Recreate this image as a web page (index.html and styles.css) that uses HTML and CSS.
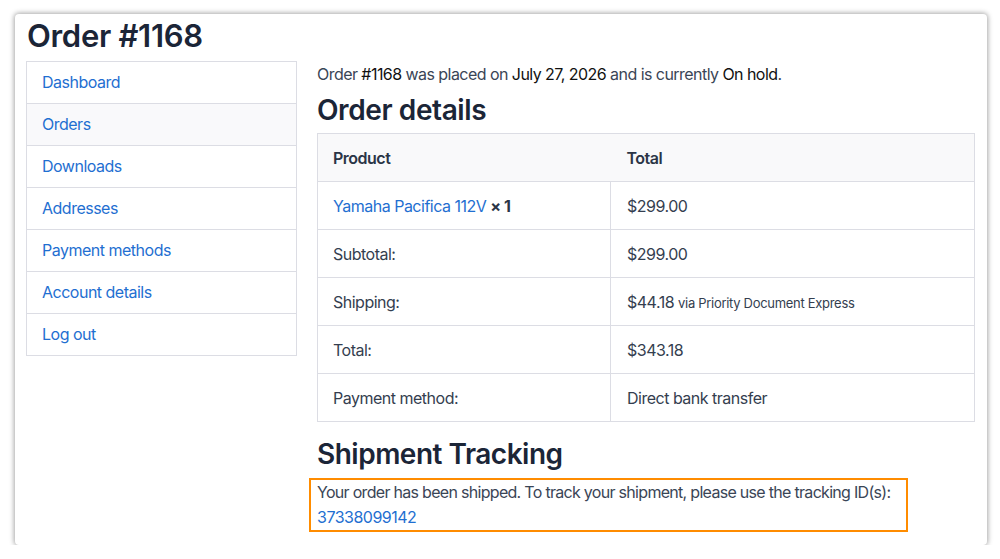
FILE: index.html
```html
<!DOCTYPE html>
<html>
<head>
<meta charset="utf-8">
<link rel="stylesheet" href="styles.css">
</head>
<body>
<div class="card">
  <h1 class="title">Order #1168</h1>
  <div class="layout">
    <nav class="nav">
      <a class="nav-item" href="#">Dashboard</a>
      <a class="nav-item active" href="#">Orders</a>
      <a class="nav-item" href="#">Downloads</a>
      <a class="nav-item" href="#">Addresses</a>
      <a class="nav-item" href="#">Payment methods</a>
      <a class="nav-item" href="#">Account details</a>
      <a class="nav-item" href="#">Log out</a>
    </nav>
    <main class="main">
      <p class="intro">Order <mark>#1168</mark> was placed on <mark>July 27, 2026</mark> and is currently <mark>On hold</mark>.</p>
      <h2 class="heading">Order details</h2>
      <table class="details">
        <thead>
          <tr><th class="c1">Product</th><th>Total</th></tr>
        </thead>
        <tbody>
          <tr><td class="c1"><a href="#">Yamaha Pacifica 112V</a> <strong>× 1</strong></td><td>$299.00</td></tr>
          <tr><td class="c1">Subtotal:</td><td>$299.00</td></tr>
          <tr><td class="c1">Shipping:</td><td>$44.18 <small>via Priority Document Express</small></td></tr>
          <tr><td class="c1">Total:</td><td>$343.18</td></tr>
          <tr><td class="c1">Payment method:</td><td>Direct bank transfer</td></tr>
        </tbody>
      </table>
      <h2 class="heading heading-ship">Shipment Tracking</h2>
      <div class="tracking">
        <p>Your order has been shipped. To track your shipment, please use the tracking ID(s):</p>
        <a href="#">37338099142</a>
      </div>
    </main>
  </div>
</div>
</body>
</html>
```

FILE: styles.css
```css
* { box-sizing: border-box; }
html, body { margin: 0; padding: 0; background: #ffffff; }
body {
  font-family: Inter, "Noto Sans", "Liberation Sans", sans-serif;
  color: #3a4556;
  font-size: 16px;
  letter-spacing: -0.5px;
  padding: 14px 13px 0 15px;
}
.card {
  background: #fff;
  border-radius: 4px;
  box-shadow: 0 0 5px 1px rgba(0, 0, 0, 0.35);
  height: 531px;
  padding: 3px 12px 0 11px;
  overflow: hidden;
}
.title {
  margin: 0 0 6px 0;
  font-size: 31px;
  line-height: 38px;
  font-weight: 600;
  color: #1b2537;
  letter-spacing: -0.3px;
  padding-left: 1px;
}
.layout {
  display: grid;
  grid-template-columns: 271px 1fr;
  column-gap: 20px;
  align-items: start;
}
.nav {
  display: flex;
  flex-direction: column;
  border: 1px solid #dcdde4;
}
.nav-item {
  display: block;
  height: 42px;
  line-height: 41px;
  padding-left: 15px;
  color: #1f6fd1;
  text-decoration: none;
  border-top: 1px solid #dcdde4;
}
.nav-item:first-child { border-top: none; height: 41px; line-height: 41px; }
.nav-item.active { background: #f9f9fb; }
.main { min-width: 0; }
.intro {
  margin: 0;
  line-height: 26px;
  letter-spacing: -0.55px;
}
.intro mark { background: none; color: #111; }
.heading {
  margin: 6px 0 6px 0;
  font-size: 28px;
  line-height: 34px;
  font-weight: 600;
  color: #1b2537;
  letter-spacing: -0.4px;
}
.heading-ship { margin: 15px 0 7px 0; letter-spacing: -0.5px; }
.details {
  width: 658px;
  border-collapse: collapse;
  border: 1px solid #dcdde4;
}
.details th, .details td {
  text-align: left;
  padding: 0 16px;
  height: 48px;
  border-top: 1px solid #dcdde4;
  color: #343e4f;
}
.details .c1 { padding-left: 15px; }
.details th { font-weight: 600; background: #f9f9fa; color: #2b3546; }
.details td.c1 { width: 293px; border-right: 1px solid #dcdde4; }
.details a { color: #1f6fd1; text-decoration: none; }
.details strong { color: #2b3546; font-weight: 700; }
.details small { font-size: 13px; letter-spacing: -0.3px; }
.tracking {
  margin-left: -8px;
  width: 599px;
  border: 2px solid #ff8c00;
  padding: 0 6px;
  line-height: 25px;
}
.tracking p { margin: 0; white-space: nowrap; letter-spacing: -0.7px; }
.tracking a { color: #1f6fd1; text-decoration: none; }
```
